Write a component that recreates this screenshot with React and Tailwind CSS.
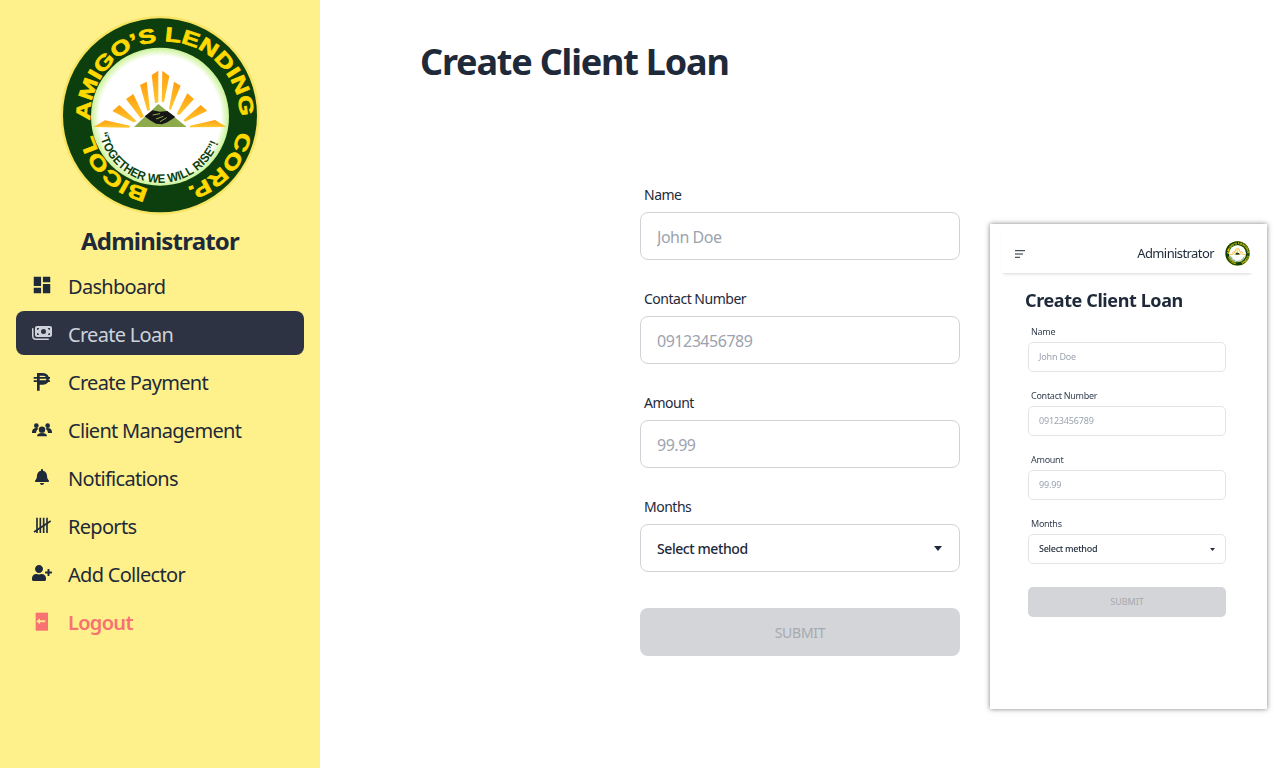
import React from 'react';
import { MdDashboard } from 'react-icons/md';
import { FaMoneyBills } from 'react-icons/fa6';
import { FaBell, FaUserPlus } from 'react-icons/fa';

// hand drawn icons, all on the same 60 unit box
const Peso = (props) => (
  <svg viewBox="18 9 60 60" fill="none" stroke="currentColor" {...props}>
    <path d="M37 68V19h14c9 0 14 6 14 13.500S60 46 51 46H37" strokeWidth="8" />
    <path d="M23 29.500h49M23 39.500h49" strokeWidth="5" />
  </svg>
);

const People = (props) => (
  <svg viewBox="18 9 60 60" fill="currentColor" {...props}>
    <circle cx="31" cy="29" r="7" />
    <circle cx="65" cy="29" r="7" />
    <path d="M18 48c0-8 6-12 13-12 3 0 5 1 7 2-5 3-8 7-8 13H18zM78 48c0-8-6-12-13-12-3 0-5 1-7 2 5 3 8 7 8 13h12z" />
    <circle cx="48" cy="41" r="9.500" />
    <path d="M33 61c0-7 7-10 15-10s15 3 15 10z" />
  </svg>
);

const Tally = (props) => (
  <svg viewBox="18 9 60 60" fill="none" stroke="currentColor" {...props}>
    <path d="M33 17v46M43 17v46M53 17v46M63 17v46" strokeWidth="5" />
    <path d="M24 60 74 27" strokeWidth="4.500" />
  </svg>
);

const LogoutDoor = (props) => (
  <svg viewBox="18 9 60 60" {...props}>
    <rect x="29" y="14" width="37" height="54" fill="currentColor" />
    <path d="M31 40 42 31v6h16v6H42v6z" fill="#fde68a" />
  </svg>
);

const Logo = ({ className }) => (
  <svg viewBox="30 33 600 600" className={className}>
    <defs>
      <radialGradient id="glow" cx="50%" cy="50%" r="50%">
        <stop offset="88%" stopColor="#ffffff" />
        <stop offset="100%" stopColor="#c9f294" />
      </radialGradient>
      <linearGradient id="ray" x1="0" y1="0" x2="0" y2="1">
        <stop offset="0%" stopColor="#ff9f0f" />
        <stop offset="100%" stopColor="#ffc72e" />
      </linearGradient>
      <path id="ringPath" d="M 296 552 A 224 224 0 1 1 306 554" />
      <path id="mottoPath" d="M 148 385 A 187 187 0 0 0 514 385" />
    </defs>
    <circle cx="330" cy="331" r="298" fill="#f7e463" />
    <circle cx="330" cy="331" r="291" fill="#0c3f0d" />
    <circle cx="330" cy="335" r="207" fill="url(#glow)" />
    <text
      fill="#ffd900"
      stroke="#ffd900"
      strokeWidth="2"
      fontSize="60"
      fontWeight="700"
      style={{ fontFamily: '"Liberation Sans", sans-serif' }}
    >
      <textPath href="#ringPath" textLength="1290" lengthAdjust="spacingAndGlyphs">{'BICOL\u00A0\u00A0AMIGO’S LENDING\u00A0\u00A0CORP.'}</textPath>
    </text>
    <g fill="url(#ray)">
      <path d="M130 366 165 346 240 362 238 368Z" />
      <path d="M187 318 208 300 260 349 250 352Z" />
      <path d="M228 282 250 267 282 335 272 340Z" />
      <path d="M270 240 290 230 300 315 292 318Z" />
      <path d="M305 210 325 197 325 292 315 295Z" />
      <path d="M337 197 358 213 342 292 335 290Z" />
      <path d="M372 230 392 242 362 315 357 312Z" />
      <path d="M412 265 432 282 388 330 380 327Z" />
      <path d="M452 300 472 317 405 350 400 346Z" />
      <path d="M495 345 530 366 420 367 420 362Z" />
    </g>
    <path d="M252 366 325 297 410 366Z" fill="#8dab4b" />
    <path d="M284 334 308 316 330 320 352 318 376 336 352 352 336 358 318 356 300 346Z" fill="#161616" />
    <path d="M308 330 330 326M318 342 340 334M330 350 350 338" stroke="#8dab4b" strokeWidth="3" fill="none" />
    <text fill="#0c3f0d" fontSize="37" fontWeight="700" style={{ fontFamily: '"Liberation Sans", sans-serif' }}>
      <textPath href="#mottoPath" textLength="480" lengthAdjust="spacingAndGlyphs">“TOGETHER WE WILL RISE”!</textPath>
    </text>
  </svg>
);

const menu = [
  { label: 'Dashboard', icon: <MdDashboard className="w-[22px] h-[22px] shrink-0" /> },
  { label: 'Create Loan', icon: <FaMoneyBills className="w-5 h-5" />, active: true },
  { label: 'Create Payment', icon: <Peso className="w-5 h-5" /> },
  { label: 'Client Management', icon: <People className="w-5 h-5" /> },
  { label: 'Notifications', icon: <FaBell className="w-4 h-4" /> },
  { label: 'Reports', icon: <Tally className="w-5 h-5" /> },
  { label: 'Add Collector', icon: <FaUserPlus className="w-5 h-5" /> },
  { label: 'Logout', icon: <LogoutDoor className="w-5 h-5" />, logout: true },
];

const Sidebar = () => (
  <aside className="w-80 h-screen shrink-0 bg-[#fef08a] px-4 pt-4 flex flex-col">
    <Logo className="w-[200px] h-[200px] mx-auto" />
    <h2 className="mt-[9px] text-2xl leading-8 font-bold text-center text-gray-800 tracking-[-0.033em]">Administrator</h2>
    <ul className="mt-[6px] flex flex-col gap-1">
      {menu.map((item) => (
        <li
          key={item.label}
          className={`h-11 rounded-lg px-4 flex items-center text-xl tracking-[-0.035em] ${
            item.active ? 'bg-[#2d3342] text-[#cdd2da]' : item.logout ? 'text-[#f87272] font-semibold' : 'text-gray-800'
          }`}
        >
          <span className="w-5 mr-4 flex justify-center">{item.icon}</span>
          <span className="pt-1">{item.label}</span>
        </li>
      ))}
    </ul>
  </aside>
);

const fields = [
  { label: 'Name', placeholder: 'John Doe' },
  { label: 'Contact Number', placeholder: '09123456789' },
  { label: 'Amount', placeholder: '99.99' },
];

const Caret = ({ className }) => (
  <svg viewBox="0 0 8 5" className={className}>
    <path d="M0 0h8L4 5z" fill="currentColor" />
  </svg>
);

const LoanForm = () => (
  <form className="w-80 flex flex-col gap-5">
    {fields.map((f) => (
      <div key={f.label}>
        <label className="block h-9 pl-1 pt-[9px] text-sm leading-5 text-gray-800 tracking-[-0.035em]">{f.label}</label>
        <input
          placeholder={f.placeholder}
          className="w-full h-12 px-4 pt-[2px] text-base tracking-[-0.03em] rounded-lg border border-[#d1d2d8] bg-white outline-none placeholder:text-[#9ca3af]"
        />
      </div>
    ))}
    <div>
      <label className="block h-9 pl-1 pt-[9px] text-sm leading-5 text-gray-800 tracking-[-0.035em]">Months</label>
      <div className="w-full h-12 px-4 pt-[2px] rounded-lg border border-[#d1d2d8] bg-white flex items-center justify-between text-sm font-medium text-gray-800 tracking-[-0.03em]">
        Select method
        <Caret className="w-2 h-[5px] -mt-[2px] mr-px" />
      </div>
    </div>
    <button
      type="button"
      className="w-full h-12 mt-4 pt-[2px] rounded-lg bg-[#d3d5d9] text-sm text-[#a6a9b0] uppercase tracking-[-0.02em]"
    >
      Submit
    </button>
  </form>
);

const miniFields = ['Name', 'Contact Number', 'Amount'];
const miniHolders = ['John Doe', '09123456789', '99.99'];

const PhonePreview = () => (
  <div className="absolute left-[670px] top-[224px] w-[277px] h-[485px] bg-white shadow-[0_0_5px_rgba(0,0,0,0.5)]">
    <div className="blur-[0.3px]">
      <div className="ml-[11px] mr-[14px] h-[49px] shadow-[0_3px_3px_-2px_rgba(0,0,0,0.16)] flex items-center justify-between pl-[14px] pr-[3px] pt-[10px]">
        <svg viewBox="0 0 10 8" className="w-[10px] h-2 text-gray-800">
          <path d="M0 .7h10M0 4h8M0 7.3h5" stroke="currentColor" strokeWidth="1" />
        </svg>
        <div className="flex items-center gap-[11px]">
          <span className="text-[13px] text-gray-800 tracking-[-0.045em]">Administrator</span>
          <Logo className="w-[25px] h-[25px]" />
        </div>
      </div>
      <h2 className="ml-[35px] mt-[15px] text-lg leading-6 font-bold text-gray-800 tracking-[-0.022em]">Create Client Loan</h2>
      <div className="ml-[38px] w-[198px] mt-[8px] flex flex-col gap-[12px]">
        {miniFields.map((label, i) => (
          <div key={label}>
            <div className="h-[22px] pl-[3px] pt-[5px] text-[9px] leading-[14px] text-gray-700 tracking-[-0.03em]">{label}</div>
            <div className="h-[30px] px-[10px] rounded-[5px] border border-[#e3e4e8] flex items-center text-[9px] text-[#9ca3af] tracking-[-0.02em]">
              {miniHolders[i]}
            </div>
          </div>
        ))}
        <div>
          <div className="h-[22px] pl-[3px] pt-[5px] text-[9px] leading-[14px] text-gray-700 tracking-[-0.03em]">Months</div>
          <div className="h-[30px] px-[10px] rounded-[5px] border border-[#e3e4e8] flex items-center justify-between text-[9px] font-medium text-gray-800 tracking-[-0.03em]">
            Select method
            <Caret className="w-[5px] h-[3px]" />
          </div>
        </div>
        <div className="h-[30px] mt-[11px] rounded-[5px] bg-[#d3d5d9] flex items-center justify-center text-[9px] text-[#a6a9b0]">
          SUBMIT
        </div>
      </div>
    </div>
  </div>
);

export default function App() {
  return (
    <div className="flex h-screen overflow-hidden bg-white font-['Noto_Sans',sans-serif]">
      <Sidebar />
      <main className="relative flex-1">
        <h1 className="ml-[100px] mt-[42px] text-4xl leading-10 font-bold text-gray-800 tracking-[-0.033em]">Create Client Loan</h1>
        <div className="mt-[94px] flex justify-center">
          <LoanForm />
        </div>
        <PhonePreview />
      </main>
    </div>
  );
}
